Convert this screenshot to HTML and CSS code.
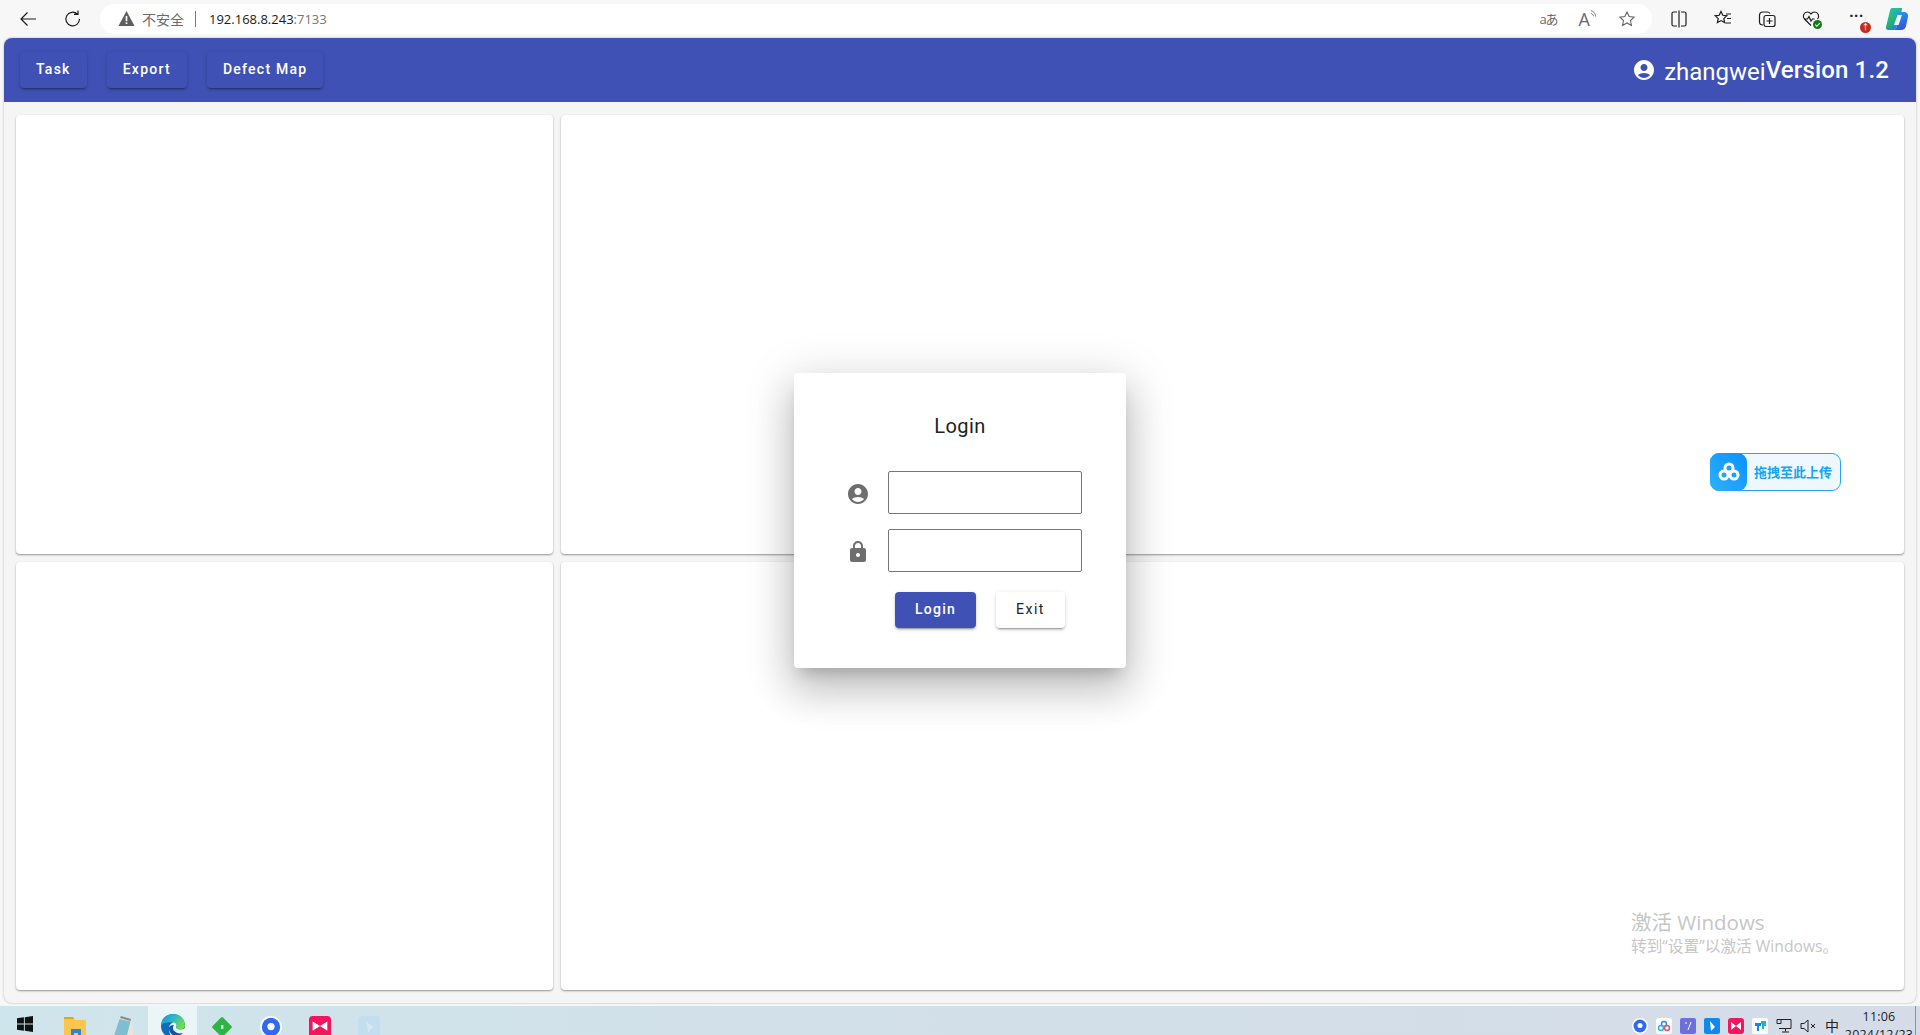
FILE: index.html
```html
<!DOCTYPE html>
<html lang="en">
<head>
  <meta charset="UTF-8" />
  <title>Defect Viewer</title>
  <link rel="stylesheet" href="styles.css">
</head>
<body>
  <div class="browser-bar">
    <div class="nav-icons">
      <svg class="tb-icon" viewBox="0 0 20 20"><path d="M18 10H3M9.500 3.500L3 10l6.500 6.500" /></svg>
      <svg class="tb-icon" viewBox="0 0 20 20"><path d="M16.500 10a6.800 6.800 0 1 1-2.200-5M15 1.500V5.400h-4" /></svg>
    </div>
    <div class="address">
      <svg class="warn" viewBox="0 0 16 16"><path d="M8 1l7.600 14H.4z" fill="#5f5f5f" /><rect x="7.200" y="5.600" width="1.600" height="5" fill="#fff" /><rect x="7.200" y="11.600" width="1.600" height="1.600" fill="#fff" /></svg>
      <span class="not-safe">不安全</span>
      <span class="addr-sep"></span>
      <span class="host">192.168.8.243</span><span class="port">:7133</span>
      <div class="addr-right">
        <span class="translate">aあ</span>
        <span class="read">A<svg viewBox="0 0 8 10"><path d="M1 1c3 1 5 3 5.500 7M1 4c1.500.5 2.500 1.500 3 3.500" /></svg></span>
        <svg class="star" viewBox="0 0 20 20"><path d="M10 2.200l2.400 5 5.500.7-4 3.800 1 5.400-4.900-2.700-4.900 2.700 1-5.400-4-3.800 5.500-.7z" /></svg>
      </div>
    </div>
    <div class="edge-tools">
      <svg class="tb-icon" viewBox="0 0 20 20"><path d="M8 3H4.500A1.500 1.500 0 0 0 3 4.500v11A1.500 1.500 0 0 0 4.500 17H8M12 3h3.500A1.500 1.500 0 0 1 17 4.500v11a1.500 1.500 0 0 1-1.500 1.500H12M10 1.500v17" /></svg>
      <svg class="tb-icon" viewBox="0 0 20 20"><path d="M8 2.500l1.800 3.800 4 .5-3 2.800.8 4-3.600-2-3.600 2 .8-4-3-2.800 4-.5zM13 5h5M14 9.500h4M12.500 14H18" /></svg>
      <svg class="tb-icon" viewBox="0 0 20 20"><path d="M6 16c-2 0-3.500-1-3.500-3V6.500C2.500 4 4 3 6 3h4c1.500 0 2.500.5 3 1.500" /><rect x="7" y="6.500" width="11" height="11" rx="2" /><path d="M12.500 9v6M9.500 12h6" /></svg>
      <div class="health">
        <svg class="tb-icon" viewBox="0 0 20 20"><path d="M10 16.500L3.500 10C1 7 3 3 6.500 3 8 3 9.200 3.800 10 5c.8-1.200 2-2 3.500-2C17 3 19 7 16.500 10M3 10h3.500l1.500-2.500 2 4.500 1.500-2h2" /></svg>
        <svg class="health-dot" viewBox="0 0 10 10"><circle cx="5" cy="5" r="5" fill="#107c10" /><path d="M2.500 5.200l1.800 1.800 3.300-3.600" fill="none" stroke="#fff" stroke-width="1.200" /></svg>
      </div>
      <div class="more">
        <span class="dots">···</span>
        <span class="more-badge">↑</span>
      </div>
      <svg class="copilot" viewBox="0 0 24 24">
        <defs>
          <linearGradient id="copLeft" x1="0" y1="0" x2="0.6" y2="1"><stop offset="0" stop-color="#1fc7c0" /><stop offset=".6" stop-color="#27b36f" /><stop offset="1" stop-color="#1f7fe0" /></linearGradient>
          <linearGradient id="copRight" x1="0.2" y1="0" x2="0.7" y2="1"><stop offset="0" stop-color="#2aa3ee" /><stop offset=".6" stop-color="#2b6fe6" /><stop offset="1" stop-color="#3b4fd0" /></linearGradient>
        </defs>
        <path d="M7 1h9c1 0 1.500.5 1 1.500L11 21c-.5 1.500-1.500 2-3 2H3.500C1.500 23 .5 21.500 1 20L5 3.500C5.300 2 6 1 7 1z" fill="url(#copLeft)" />
        <path d="M11 5h7.500c3 0 5 2 4.500 4.500l-2 9.500c-.5 2.500-2.500 4-5 4H8c2 0 3-1.500 3.500-3z" fill="url(#copRight)" />
        <path d="M12.500 8h4.500l-3.500 10H9z" fill="#f2f8fc" />
      </svg>
    </div>
  </div>

  <div class="app-window">
    <header class="app-header">
      <nav class="header-btns">
        <button class="btn btn-primary">Task</button>
        <button class="btn btn-primary">Export</button>
        <button class="btn btn-primary">Defect Map</button>
      </nav>
      <div class="user-info">
        <svg class="user-icon" viewBox="0 0 24 24"><path d="M12 2C6.480 2 2 6.480 2 12s4.480 10 10 10 10-4.480 10-10S17.520 2 12 2zm0 4c1.930 0 3.500 1.570 3.500 3.500S13.930 13 12 13s-3.500-1.570-3.500-3.500S10.070 6 12 6zm0 14c-2.030 0-4.430-.820-6.140-2.880C7.550 15.800 9.680 15 12 15s4.450.800 6.140 2.120C16.430 19.180 14.030 20 12 20z" /></svg>
        <span class="user-name">zhangwei</span><span class="version">Version 1.2</span>
      </div>
    </header>
    <main class="panel-grid">
      <div class="panel"></div>
      <div class="panel"></div>
      <div class="panel"></div>
      <div class="panel"></div>
    </main>
  </div>

  <div class="taskbar">
    <div class="task-left">
      <div class="task-slot">
        <svg class="win-logo" viewBox="0 0 16 16"><path d="M0 2.300l6.900-1v6.300H0zM7.800 1.200L16 0v7.600H7.800zM0 8.400h6.900v6.300l-6.900-1zM7.800 8.400H16V16l-8.200-1.200z" /></svg>
      </div>
      <div class="task-slot">
        <svg class="app-icon" viewBox="0 0 22 24"><path d="M0 2h9l2 3h11v19H0z" fill="#fbc64e" /><path d="M0 2h9l1 2H0z" fill="#e8a317" /><rect x="7" y="14" width="10" height="10" fill="#2a86d8" /><rect x="10" y="18" width="4" height="6" fill="#fbc64e" /></svg>
      </div>
      <div class="task-slot">
        <svg class="app-icon" viewBox="0 0 22 24"><path d="M7 2l12 3 1 19H0z" fill="#e8e6dc" /><path d="M6.500 4l11 2.500L13 24H0z" fill="#7fbdd0" /><path d="M8 1l10 3-.5 2L7 3z" fill="#8d8a80" /></svg>
      </div>
      <div class="task-slot task-active">
        <svg class="app-icon app-edge" viewBox="0 0 24 24">
          <defs>
            <linearGradient id="edgeTop" x1="0" y1="0" x2="1" y2="0.5"><stop offset="0" stop-color="#1b8ed8" /><stop offset=".5" stop-color="#2bb5c9" /><stop offset="1" stop-color="#6fdc4f" /></linearGradient>
          </defs>
          <circle cx="12" cy="12" r="12" fill="#0f6cbd" />
          <path d="M0 12C0 5 5 0 12 0c7 0 12 5 12 11.500 0 2.500-2.500 4-5.500 4-2 0-3.500-.5-3.500-1.500 1-1 .5-5-3-5.500C8 8 2 8 0 12z" fill="url(#edgeTop)" />
          <path d="M8 14c0-3 2.500-5.500 5-5.500 2 .5 3 2.500 2 4.500-.3 1.500 2 2.500 3.500 2.500 1.500 0 4-.5 5.500-1.500L24 24H11C9 21 8 17 8 14z" fill="#ebf4f7" />
          <path d="M8 14c0 4 2.500 7.500 6.500 8 3 .3 6-1 7.500-3-3 1-6 .5-8-1.500C11 15.500 12 12 13 11c-2.500 0-5 1-5 3z" fill="#0c59a4" />
        </svg>
      </div>
      <div class="task-slot">
        <svg class="app-icon" viewBox="0 0 24 24"><rect x="4" y="4" width="16" height="16" rx="1.500" transform="rotate(45 12 12)" fill="#2fb344" /><rect x="11" y="10" width="2.500" height="4" fill="#d7f5dc" /></svg>
      </div>
      <div class="task-slot">
        <svg class="app-icon" viewBox="0 0 24 24"><circle cx="12" cy="12" r="12" fill="#fff" /><circle cx="12" cy="12" r="10" fill="#2d6bf3" /><circle cx="12" cy="11.500" r="4" fill="#fff" /></svg>
      </div>
      <div class="task-slot">
        <svg class="app-icon" viewBox="0 0 24 24"><rect width="24" height="24" rx="4" fill="#f2165e" /><path d="M4 6l8 5-8 5zM20 6l-8 5 8 5z" fill="#fff" /></svg>
      </div>
      <div class="task-slot">
        <svg class="app-icon app-faded" viewBox="0 0 24 24"><rect width="24" height="24" rx="4" fill="#b9dcf3" /><path d="M9 6l8 6-6 6z" fill="#d6ecf7" /></svg>
      </div>
    </div>
    <div class="tray">
      <svg class="tray-icon" viewBox="0 0 16 16"><circle cx="8" cy="8" r="8" fill="#fff" /><circle cx="8" cy="8" r="6.500" fill="#2d6bf3" /><circle cx="8" cy="7.500" r="2.500" fill="#fff" /></svg>
      <svg class="tray-icon" viewBox="0 0 16 16"><rect width="16" height="16" rx="3" fill="#fff" /><circle cx="8" cy="6" r="2.500" fill="none" stroke="#2c8ce8" stroke-width="1.500" /><circle cx="5" cy="10" r="2.500" fill="none" stroke="#2ab4e8" stroke-width="1.500" /><circle cx="11" cy="10" r="2.500" fill="none" stroke="#e8506b" stroke-width="1.500" /></svg>
      <svg class="tray-icon" viewBox="0 0 16 16"><rect width="16" height="16" rx="2" fill="#6d6fdd" /><path d="M5 5h2M11 4L8 12" stroke="#fff" fill="none" /></svg>
      <svg class="tray-icon" viewBox="0 0 16 16"><rect width="16" height="16" rx="2" fill="#1289ea" /><path d="M6 3l5 6-4 4z" fill="#fff" /></svg>
      <svg class="tray-icon" viewBox="0 0 16 16"><rect width="16" height="16" rx="3" fill="#f2165e" /><path d="M3 4l5 4-5 4zM13 4L8 8l5 4z" fill="#fff" /></svg>
      <svg class="tray-icon" viewBox="0 0 16 16"><rect width="16" height="16" rx="2" fill="#fff" /><path d="M3 5h6v3H7v5H5V8H3z" fill="#1289ea" /><path d="M9 3h5v5h-2v3h-2V6H9z" fill="#19b7c9" /></svg>
      <svg class="tray-line" viewBox="0 0 16 16"><path d="M4 1.500h11v9H3M1 1.500h4v4H1zM9.500 10.500v3M6 14h7" /></svg>
      <svg class="tray-line" viewBox="0 0 16 16"><path d="M1 5.500h3L8 2v12L4 10.500H1zM11 6l4 4M15 6l-4 4" /></svg>
      <span class="ime">中</span>
      <div class="clock"><span>11:06</span><span>2024/12/23</span></div>
      <span class="show-desktop"></span>
    </div>
  </div>

  <!-- floating things over the page -->
  <div class="login-dialog">
    <h2 class="login-title">Login</h2>
    <div class="login-row">
      <svg class="field-icon" viewBox="0 0 24 24"><path d="M12 2C6.480 2 2 6.480 2 12s4.480 10 10 10 10-4.480 10-10S17.520 2 12 2zm0 4c1.930 0 3.500 1.570 3.500 3.500S13.930 13 12 13s-3.500-1.570-3.500-3.500S10.070 6 12 6zm0 14c-2.030 0-4.430-.820-6.140-2.880C7.550 15.800 9.680 15 12 15s4.450.800 6.140 2.120C16.430 19.180 14.030 20 12 20z" /></svg>
      <input class="login-input" type="text">
    </div>
    <div class="login-row">
      <svg class="field-icon" viewBox="0 0 24 24"><path d="M18 8h-1V6c0-2.760-2.240-5-5-5S7 3.240 7 6v2H6c-1.100 0-2 .900-2 2v10c0 1.100.900 2 2 2h12c1.100 0 2-.900 2-2V10c0-1.100-.900-2-2-2zm-6 9c-1.100 0-2-.900-2-2s.900-2 2-2 2 .900 2 2-.900 2-2 2zm3.100-9H8.900V6c0-1.710 1.390-3.100 3.100-3.100 1.710 0 3.100 1.390 3.100 3.100v2z" /></svg>
      <input class="login-input" type="password">
    </div>
    <div class="login-actions">
      <button class="btn btn-primary">Login</button>
      <button class="btn btn-white">Exit</button>
    </div>
  </div>

  <div class="upload-tag">
    <span class="upload-icon">
      <svg viewBox="0 0 24 24"><circle cx="12" cy="8" r="4" /><circle cx="7" cy="15" r="4" /><circle cx="17" cy="15" r="4" /></svg>
    </span>
    <span class="upload-text">拖拽至此上传</span>
  </div>

  <div class="activate">
    <div class="activate-big">激活 Windows</div>
    <div class="activate-small">转到“设置”以激活 Windows。</div>
  </div>
</body>
</html>
```

FILE: styles.css
```css
:root {
  --indigo: #3f51b5;
  --page-bg: #f5f5f5;
  --ui-font: "Open Sans", "Noto Sans CJK SC", sans-serif;
  --btn-shadow: 0 3px 1px -2px rgba(0,0,0,.2), 0 2px 2px 0 rgba(0,0,0,.14), 0 1px 5px 0 rgba(0,0,0,.12);
}

* {
  box-sizing: border-box;
}

body {
  margin: 0;
  width: 1920px;
  height: 1035px;
  overflow: hidden;
  position: relative;
  background: #f7f7f7;
  font-family: Roboto, "Noto Sans CJK SC", sans-serif;
}

/* browser chrome */
.browser-bar {
  height: 38px;
  display: flex;
  align-items: center;
  padding: 0 0 0 18px;
  background: #f7f7f7;
}

.nav-icons {
  display: flex;
  gap: 25px;
  width: 82px;
}

.tb-icon {
  width: 20px;
  height: 20px;
  fill: none;
  stroke: #1c1c1c;
  stroke-width: 1.2;
  flex: none;
}

.address {
  width: 1552px;
  height: 30px;
  margin-top: -1px;
  border-radius: 15px;
  background: #fff;
  display: flex;
  align-items: center;
  padding-left: 18px;
  font-family: var(--ui-font);
  font-size: 13px;
}

.warn {
  width: 17px;
  height: 17px;
  margin-right: 7px;
}

.not-safe {
  color: #6a6a6a;
  font-size: 14px;
}

.addr-sep {
  width: 1px;
  height: 16px;
  background: #777;
  margin: 0 13px 0 11px;
}

.host {
  color: #1a1a1a;
  font-size: 13px;
}

.port {
  color: #767676;
  font-size: 13px;
}

.addr-right {
  margin-left: auto;
  display: flex;
  align-items: center;
  gap: 21px;
  padding-right: 16px;
  color: #6a6a6a;
}

.translate {
  font-size: 13px;
  letter-spacing: -1px;
}

.read {
  display: flex;
  font-size: 18px;
  line-height: 20px;
}

.read svg {
  width: 7px;
  height: 10px;
  fill: none;
  stroke: #6a6a6a;
}

.star {
  width: 18px;
  height: 18px;
  fill: none;
  stroke: #666;
  stroke-width: 1.2;
}

.edge-tools {
  display: flex;
  align-items: center;
  gap: 24px;
  margin-left: 17px;
}

.health,
.more {
  position: relative;
  width: 20px;
  height: 20px;
}

.health-dot {
  position: absolute;
  right: -1px;
  bottom: 0;
  width: 9px;
  height: 9px;
}

.dots {
  position: absolute;
  left: 4px;
  top: -3px;
  font-size: 16px;
  font-weight: 700;
  color: #222;
}

.more-badge {
  position: absolute;
  right: -6px;
  bottom: -4px;
  width: 11px;
  height: 11px;
  border-radius: 50%;
  background: #c42b1c;
  color: #fff;
  font-size: 8px;
  line-height: 11px;
  text-align: center;
}

.copilot {
  width: 24px;
  height: 24px;
  margin-left: -4px;
}

/* app */
.app-window {
  height: 965px;
  margin: 0 4px;
  background: var(--page-bg);
  border-radius: 8px;
  overflow: hidden;
  box-shadow: 0 0 2px rgba(0,0,0,.35);
}

.app-header {
  height: 64px;
  background: var(--indigo);
  display: flex;
  align-items: center;
  justify-content: space-between;
  padding: 0 27px 0 16px;
}

.header-btns {
  display: flex;
  gap: 20px;
}

.btn {
  height: 36px;
  padding: 0 16px 2px;
  border: none;
  border-radius: 4px;
  font-family: Roboto, sans-serif;
  font-size: 14px;
  font-weight: 500;
  letter-spacing: 1.250px;
  box-shadow: var(--btn-shadow);
}

.btn-primary {
  background: var(--indigo);
  color: #fff;
}

.btn-white {
  background: #fff;
  color: #222;
  font-weight: 400;
  letter-spacing: 1.500px;
}

.user-info {
  display: flex;
  align-items: center;
  color: #fff;
}

.user-icon {
  width: 24px;
  height: 24px;
  fill: #fff;
  margin-right: 8px;
}

.user-name {
  font-size: 24px;
  margin-top: 3px;
}

.version {
  font-size: 24px;
  font-weight: 500;
  letter-spacing: .15px;
}

.panel-grid {
  display: grid;
  grid-template-columns: 537px 1343px;
  grid-template-rows: 439px 428px;
  gap: 8px;
  padding: 13px 12px;
}

.panel {
  background: #fff;
  border-radius: 4px;
  box-shadow: 0 1px 2px rgba(0,0,0,.4);
}

/* taskbar */
.taskbar {
  position: absolute;
  left: 0;
  right: 0;
  top: 1006px;
  height: 29px;
  display: flex;
  justify-content: space-between;
  background: linear-gradient(90deg, #cfe5ec, #d2dfe8 50%, #d5dce8);
  overflow: hidden;
}

.task-left {
  display: flex;
  padding-left: 1px;
}

.task-slot {
  width: 49px;
  height: 40px;
  display: flex;
  justify-content: center;
  padding-top: 9px;
}

.task-active {
  background: #ebf4f7;
  padding-top: 8px;
}

.win-logo {
  width: 16px;
  height: 16px;
  fill: #111;
  margin: 1px 0 0 -2px;
}

.app-icon {
  width: 22px;
  height: 24px;
}

.app-edge {
  width: 24px;
}

.app-faded {
  opacity: .6;
}

.tray {
  display: flex;
  align-items: flex-start;
  gap: 8px;
  padding: 12px 4px 0 0;
}

.tray-icon {
  width: 16px;
  height: 16px;
  flex: none;
}

.tray-line {
  width: 16px;
  height: 16px;
  fill: none;
  stroke: #222;
  flex: none;
}

.ime {
  width: 16px;
  font-family: var(--ui-font);
  font-size: 14px;
  line-height: 15px;
  text-align: center;
  color: #222;
}

.clock {
  display: flex;
  flex-direction: column;
  align-items: center;
  width: 58px;
  margin: -10px 0 0 2px;
  font-family: var(--ui-font);
  font-size: 12.500px;
  line-height: 18px;
  color: #222;
  letter-spacing: .2px;
  white-space: nowrap;
}

.show-desktop {
  width: 1px;
  height: 29px;
  margin: -12px 0 0 -1px;
  background: #8b93a0;
}

/* login */
.login-dialog {
  position: absolute;
  left: 794px;
  top: 373px;
  width: 332px;
  height: 295px;
  padding: 40px 0 0;
  border-radius: 4px;
  background: #fff;
  box-shadow: 0 11px 15px -7px rgba(0,0,0,.2), 0 24px 38px 3px rgba(0,0,0,.14), 0 9px 46px 8px rgba(0,0,0,.12);
}

.login-title {
  margin: 0 0 32px;
  text-align: center;
  font-size: 20px;
  line-height: 26px;
  font-weight: 400;
  letter-spacing: .4px;
  color: #212121;
}

.login-row {
  display: flex;
  align-items: center;
  height: 43px;
  margin-bottom: 15px;
}

.field-icon {
  width: 24px;
  height: 24px;
  fill: #6e6e6e;
  margin: 3px 0 0 52px;
  flex: none;
}

.login-input {
  width: 194px;
  height: 43px;
  margin-left: 18px;
  border: 1px solid #767676;
  border-radius: 2px;
  background: #fff;
}

.login-actions {
  display: flex;
  gap: 20px;
  padding-left: 101px;
  margin-top: 20px;
}

.login-actions .btn {
  padding: 0 20px 2px;
}

/* baidu netdisk drag target */
.upload-tag {
  position: absolute;
  left: 1710px;
  top: 453px;
  width: 131px;
  height: 38px;
  display: flex;
  align-items: center;
  border: 1px solid #2aa5f5;
  border-radius: 9px;
  background: #f0f8ff;
}

.upload-icon {
  width: 37px;
  height: 38px;
  margin: -1px 0 0 -1px;
  border-radius: 9px;
  background: linear-gradient(45deg, #2db1fb, #0991ff);
  display: flex;
  align-items: center;
  justify-content: center;
}

.upload-icon svg {
  width: 24px;
  height: 24px;
  fill: none;
  stroke: #fff;
  stroke-width: 3;
}

.upload-text {
  margin: -2px 0 0 7px;
  font-family: "Noto Sans CJK SC", sans-serif;
  font-size: 13px;
  font-weight: 700;
  color: #0ea6f5;
}

/* windows watermark */
.activate {
  position: absolute;
  left: 1631px;
  top: 908px;
  color: #c6c6c6;
  font-family: var(--ui-font);
}

.activate-big {
  font-size: 20.500px;
  line-height: 28px;
}

.activate-small {
  font-size: 15.700px;
  line-height: 20px;
}
```
